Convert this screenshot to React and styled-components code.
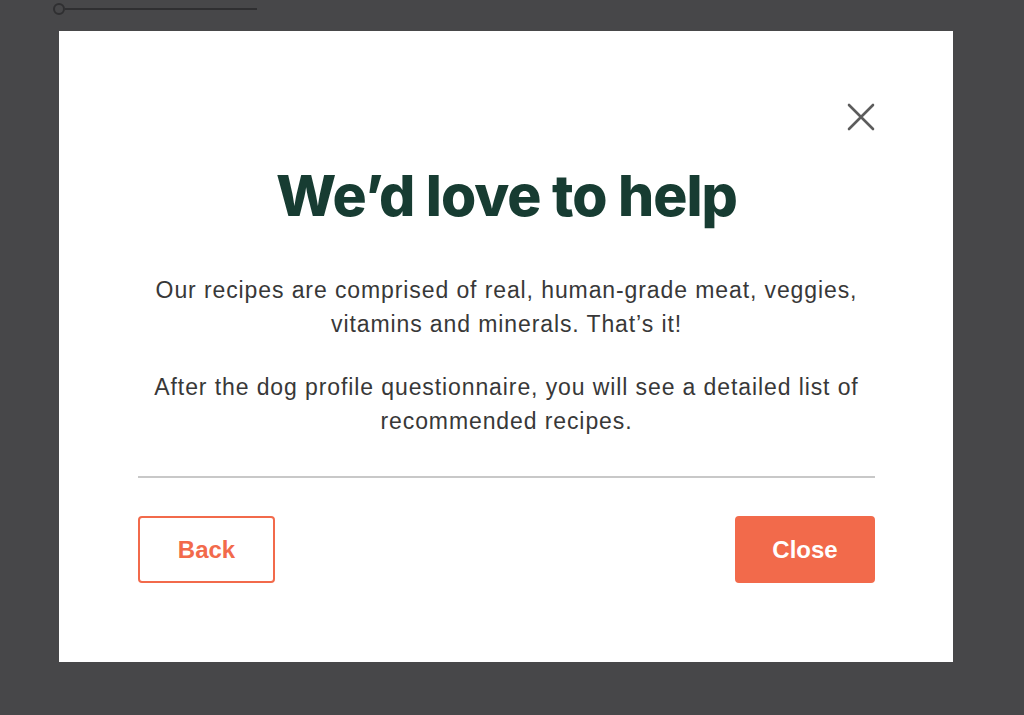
import React from 'react';
import styled, { createGlobalStyle } from 'styled-components';

const GlobalStyle = createGlobalStyle`
  html, body {
    margin: 0;
    padding: 0;
    background: #474749;
  }
  body {
    font-family: "Liberation Sans", Arial, sans-serif;
  }
`;

const Page = styled.div`
  position: relative;
  width: 1024px;
  height: 715px;
  background: #474749;
  overflow: hidden;
  padding-top: 31px;
  box-sizing: border-box;
`;

const Slider = styled.div`
  position: absolute;
  left: 53px;
  top: 3px;
  display: flex;
  align-items: center;
`;

const Knob = styled.span`
  width: 8px;
  height: 8px;
  border: 2px solid #2f2f31;
  border-radius: 50%;
`;

const Track = styled.span`
  width: 192px;
  height: 2px;
  background: #2f2f31;
`;

const Modal = styled.div`
  margin-left: 59px;
  width: 894px;
  height: 631px;
  background: #ffffff;
  box-sizing: border-box;
  padding: 72px 78px 0 79px;
  display: flex;
  flex-direction: column;
`;

const TopRow = styled.div`
  display: flex;
  justify-content: flex-end;
  height: 28px;
`;

const CloseIcon = styled.button`
  background: none;
  border: none;
  padding: 0;
  width: 28px;
  height: 28px;
  cursor: pointer;
`;

const Title = styled.h1`
  margin: 30px 0 0;
  text-align: center;
  font-family: Inter, "Liberation Sans", sans-serif;
  font-weight: 800;
  font-size: 57px;
  letter-spacing: -1px;
  line-height: 70px;
  color: #173c32;
`;

const Text = styled.p`
  margin: ${(p) => p.$top}px 0 0;
  text-align: center;
  font-size: 23px;
  letter-spacing: 0.9px;
  line-height: 34px;
  color: #383838;
`;

const Divider = styled.hr`
  margin: 38px 0 0;
  border: none;
  height: 2px;
  background: #c8c8c8;
`;

const Actions = styled.div`
  display: flex;
  justify-content: space-between;
  margin-top: 38px;
`;

const Button = styled.button`
  width: ${(p) => p.$w}px;
  height: 67px;
  box-sizing: border-box;
  border-radius: 4px;
  border: 2px solid #f26a4b;
  background: ${(p) => (p.$filled ? '#f26a4b' : '#ffffff')};
  color: ${(p) => (p.$filled ? '#ffffff' : '#f26a4b')};
  font-family: "Liberation Sans", Arial, sans-serif;
  font-weight: 700;
  font-size: 24px;
  cursor: pointer;
`;

export default function App() {
  return (
    <Page>
      <GlobalStyle />
      <Slider>
        <Knob />
        <Track />
      </Slider>
      <Modal>
        <TopRow>
          <CloseIcon aria-label="Close">
            <svg width="28" height="28" viewBox="0 0 28 28">
              <path d="M2 2 L26 26 M26 2 L2 26" stroke="#5c5c5c" strokeWidth="2.6" strokeLinecap="round" />
            </svg>
          </CloseIcon>
        </TopRow>
        <Title>We’d love to help</Title>
        <Text $top={42}>
          Our recipes are comprised of real, human-grade meat, veggies,
          <br />
          vitamins and minerals. That’s it!
        </Text>
        <Text $top={29}>
          After the dog profile questionnaire, you will see a detailed list of
          <br />
          recommended recipes.
        </Text>
        <Divider />
        <Actions>
          <Button $w={137}>Back</Button>
          <Button $w={140} $filled>Close</Button>
        </Actions>
      </Modal>
    </Page>
  );
}
